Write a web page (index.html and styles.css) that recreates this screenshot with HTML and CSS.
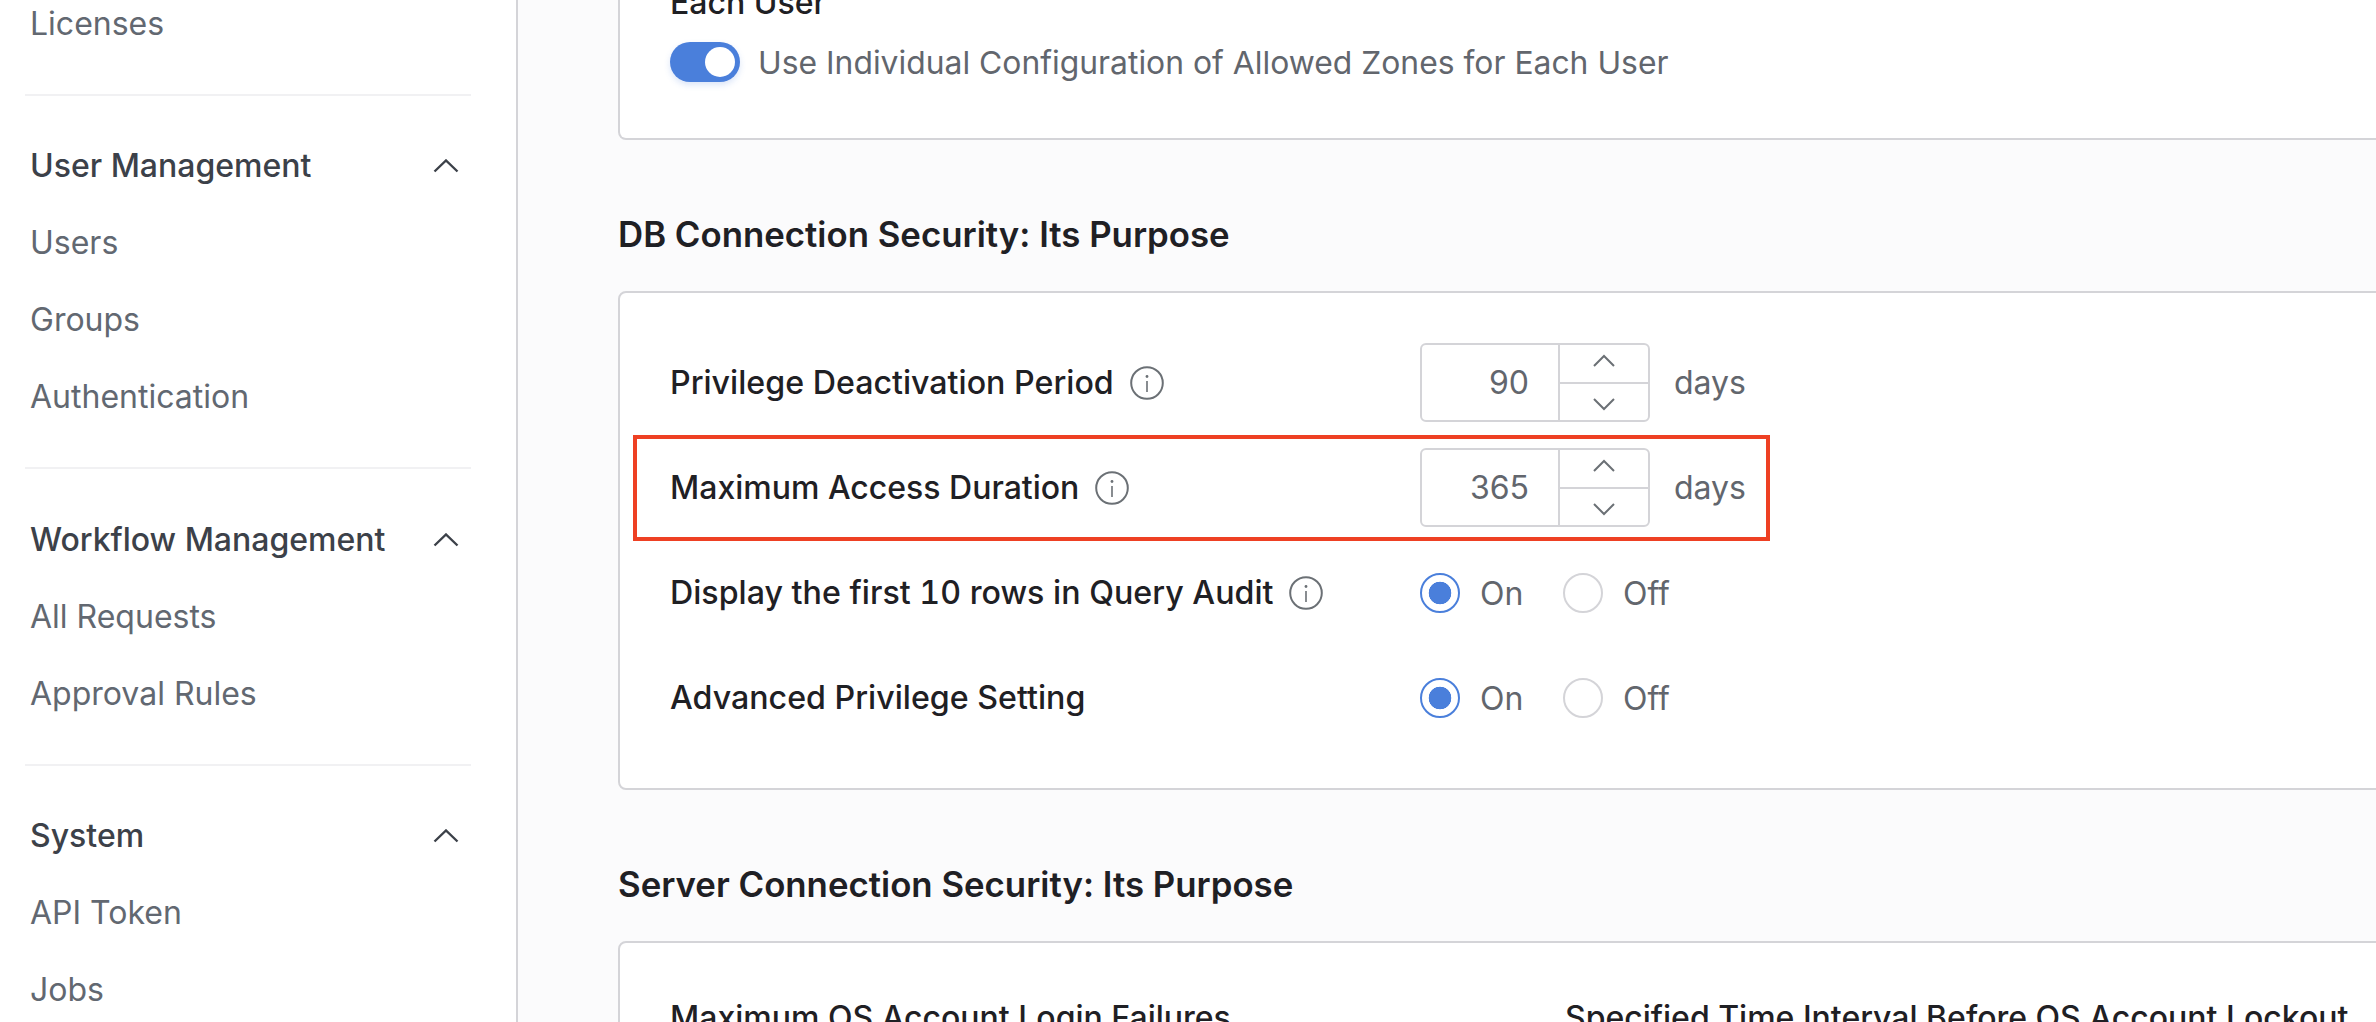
FILE: index.html
```html
<!DOCTYPE html>
<html lang="en">
<head>
<meta charset="utf-8">
<title>Security Settings</title>
<link rel="stylesheet" href="styles.css">
</head>
<body>
<svg class="defs" width="0" height="0" aria-hidden="true">
  <defs>
    <symbol id="info" viewBox="0 0 34 34">
      <circle cx="17" cy="17" r="15.8" fill="none" stroke="currentColor" stroke-width="2"/>
      <circle cx="17" cy="10.5" r="1.4" fill="currentColor"/>
      <path d="M17 15v11" fill="none" stroke="currentColor" stroke-width="1.6"/>
    </symbol>
    <symbol id="chev-up" viewBox="0 0 26 14">
      <path d="M1.5 12.5 13 1.5l11.5 11" fill="none" stroke="currentColor" stroke-width="2.4"/>
    </symbol>
    <symbol id="chev-step-up" viewBox="0 0 22 13">
      <path d="M1 12 11 2l10 10" fill="none" stroke="currentColor" stroke-width="2"/>
    </symbol>
    <symbol id="chev-step-down" viewBox="0 0 22 13">
      <path d="M1 1l10 10L21 1" fill="none" stroke="currentColor" stroke-width="2"/>
    </symbol>
  </defs>
</svg>
<div class="app">
  <aside class="sidebar">
    <nav class="nav">
      <section class="nav-group nav-group-first">
        <a class="nav-item">Licenses</a>
      </section>
      <section class="nav-group nav-group-users">
        <div class="nav-head"><span>User Management</span><svg class="nav-chev"><use href="#chev-up"/></svg></div>
        <a class="nav-item">Users</a>
        <a class="nav-item">Groups</a>
        <a class="nav-item">Authentication</a>
      </section>
      <section class="nav-group">
        <div class="nav-head"><span>Workflow Management</span><svg class="nav-chev"><use href="#chev-up"/></svg></div>
        <a class="nav-item">All Requests</a>
        <a class="nav-item">Approval Rules</a>
      </section>
      <section class="nav-group nav-group-last">
        <div class="nav-head"><span>System</span><svg class="nav-chev"><use href="#chev-up"/></svg></div>
        <a class="nav-item">API Token</a>
        <a class="nav-item">Jobs</a>
      </section>
    </nav>
  </aside>
  <main class="main">
    <div class="card card-top">
      <div class="field-title">Each User</div>
      <label class="switch-row">
        <span class="switch"><span class="switch-knob"></span></span>
        <span class="muted switch-text">Use Individual Configuration of Allowed Zones for Each User</span>
      </label>
    </div>

    <h2 class="section-title">DB Connection Security: Its Purpose</h2>
    <div class="card card-rows">
      <div class="row">
        <div class="row-label"><span>Privilege Deactivation Period</span><svg class="info"><use href="#info"/></svg></div>
        <div class="stepper">
          <span class="stepper-value">90</span>
          <span class="stepper-btns">
            <span class="stepper-btn"><svg class="step-chev"><use href="#chev-step-up"/></svg></span>
            <span class="stepper-btn"><svg class="step-chev"><use href="#chev-step-down"/></svg></span>
          </span>
        </div>
        <span class="muted unit">days</span>
      </div>
      <div class="row row-marked">
        <div class="row-label row-label-tight"><span>Maximum Access Duration</span><svg class="info"><use href="#info"/></svg></div>
        <div class="stepper">
          <span class="stepper-value">365</span>
          <span class="stepper-btns">
            <span class="stepper-btn"><svg class="step-chev"><use href="#chev-step-up"/></svg></span>
            <span class="stepper-btn"><svg class="step-chev"><use href="#chev-step-down"/></svg></span>
          </span>
        </div>
        <span class="muted unit">days</span>
      </div>
      <div class="row">
        <div class="row-label"><span class="label-numeric">Display the first 10 rows in Query Audit</span><svg class="info"><use href="#info"/></svg></div>
        <div class="radios">
          <span class="radio radio-on"></span><span class="muted radio-text">On</span>
          <span class="radio"></span><span class="muted radio-text">Off</span>
        </div>
      </div>
      <div class="row">
        <div class="row-label"><span>Advanced Privilege Setting</span></div>
        <div class="radios">
          <span class="radio radio-on"></span><span class="muted radio-text">On</span>
          <span class="radio"></span><span class="muted radio-text">Off</span>
        </div>
      </div>
    </div>

    <h2 class="section-title">Server Connection Security: Its Purpose</h2>
    <div class="card card-columns">
      <div class="field-title">Maximum OS Account Login Failures</div>
      <div class="field-title">Specified Time Interval Before OS Account Lockout</div>
    </div>
  </main>
</div>
</body>
</html>
```
FILE: styles.css
```css
*, *::before, *::after { box-sizing: border-box; }
html, body { margin: 0; height: 100%; overflow: hidden; }
body { font-family: Inter, "Liberation Sans", sans-serif; font-size: 32px; background: #fbfbfc; color: #1f2024; }
.defs { position: absolute; }
.app { display: flex; height: 1022px; overflow: hidden; }

.sidebar { flex: 0 0 518px; background: #fff; border-right: 2px solid #d4d4d8; padding: 0 45px 0 25px; }
.nav { margin-top: -15px; }
.nav-group { padding: 32px 0 32px; border-bottom: 2px solid #f1f1f3; }
.nav-group-first { padding-top: 0; }
.nav-group-users { padding-top: 31px; }
.nav-group-last { border-bottom: 0; padding-top: 31px; }
.nav-head, .nav-item { display: flex; align-items: center; height: 77px; padding-left: 5px; }
.nav-head { justify-content: space-between; font-weight: 500; color: #3c4149; padding-right: 12px; }
.nav-item { color: #626871; }
.nav-chev { width: 26px; height: 14px; color: #3c4149; }

.main { flex: 1 1 auto; min-width: 0; padding-left: 100px; }
.card { background: #fff; border: 2px solid #d4d4d8; border-radius: 8px; width: 2000px; padding-left: 50px; }
.card-top { margin-top: -50px; border-top: 0; height: 190px; padding-top: 28px; }
.field-title { font-weight: 500; line-height: 50px; color: #1f2024; }
.switch-row { display: flex; align-items: center; gap: 18px; margin-top: 14px; height: 40px; }
.switch { display: flex; align-items: center; justify-content: flex-end; width: 70px; height: 40px; padding-right: 5px; border-radius: 20px; background: #4a7fdb; box-shadow: 0 3px 6px rgba(74, 127, 219, 0.2); }
.switch-knob { width: 30px; height: 30px; border-radius: 50%; background: #fff; }
.switch-text { font-size: 31.85px; }
.muted { color: #62666d; }

.section-title { margin: 72px 0 35px; font-size: 34.8px; line-height: 44px; font-weight: 600; color: #1f2024; }

.card-rows { display: flex; flex-direction: column; gap: 26px; padding-top: 50px; padding-bottom: 51px; }
.row { position: relative; display: flex; align-items: center; height: 79px; }
.row-label { display: flex; align-items: center; gap: 16px; width: 750px; font-weight: 500; font-size: 32.2px; }
.row-label-tight { font-size: 32px; }
.label-numeric { font-variant-numeric: tabular-nums; }
.info { width: 34px; height: 34px; color: #6b7075; }
.row-marked::after { content: ""; position: absolute; left: -37px; top: -13px; width: 1137px; height: 106px; border: 4px solid #ee4023; pointer-events: none; }

.stepper { display: flex; width: 230px; height: 79px; border: 2px solid #d4d4d8; border-radius: 6px; background: #fff; }
.stepper-value { flex: 1 1 auto; display: flex; align-items: center; justify-content: flex-end; padding-right: 29px; color: #62666d; }
.stepper-btns { display: flex; flex-direction: column; flex: 0 0 90px; border-left: 2px solid #d4d4d8; }
.stepper-btn { flex: 1 1 0; display: flex; align-items: flex-start; justify-content: center; padding-top: 9px; }
.stepper-btn + .stepper-btn { border-top: 2px solid #d4d4d8; align-items: flex-end; padding: 0 0 9px; }
.step-chev { width: 22px; height: 13px; color: #6b7075; }
.unit { margin-left: 24px; }

.radios { display: flex; align-items: center; }
.radio { width: 40px; height: 40px; border-radius: 50%; border: 2px solid #d4d4d8; background: #fff; flex: none; }
.radio-on { border-color: #4a7fdb; background: radial-gradient(circle closest-side, #4a7fdb 0 11px, #fff 11.6px); }
.radio-text { margin-left: 20px; width: 83px; padding-top: 2px; }

.card-columns { display: grid; grid-template-columns: 895px 1fr; padding-top: 50px; height: 200px; }
```
